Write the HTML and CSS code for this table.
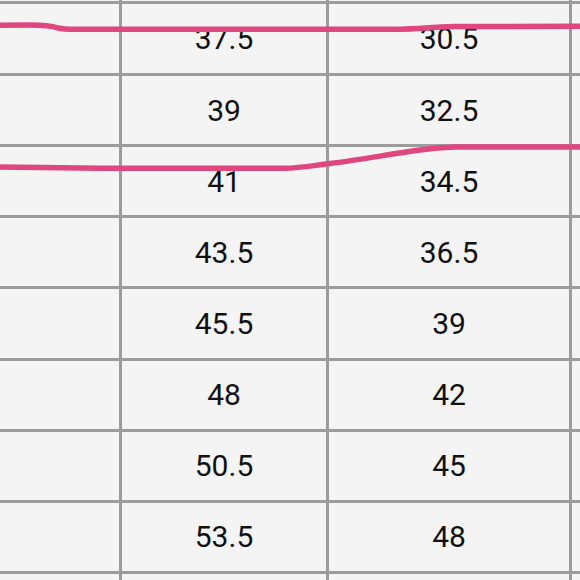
FILE: index.html
```html
<!DOCTYPE html>
<html>
<head>
<meta charset="utf-8">
<link rel="stylesheet" href="styles.css">
</head>
<body>
<div class="sheet">
  <div class="grid">
    <div class="cell"></div><div class="cell"></div><div class="cell"></div><div class="cell"></div>
    <div class="cell"></div><div class="cell">37.5</div><div class="cell">30.5</div><div class="cell"></div>
    <div class="cell"></div><div class="cell">39</div><div class="cell">32.5</div><div class="cell"></div>
    <div class="cell"></div><div class="cell">41</div><div class="cell">34.5</div><div class="cell"></div>
    <div class="cell"></div><div class="cell">43.5</div><div class="cell">36.5</div><div class="cell"></div>
    <div class="cell"></div><div class="cell">45.5</div><div class="cell">39</div><div class="cell"></div>
    <div class="cell"></div><div class="cell">48</div><div class="cell">42</div><div class="cell"></div>
    <div class="cell"></div><div class="cell">50.5</div><div class="cell">45</div><div class="cell"></div>
    <div class="cell"></div><div class="cell">53.5</div><div class="cell">48</div><div class="cell"></div>
    <div class="cell"></div><div class="cell"></div><div class="cell"></div><div class="cell"></div>
  </div>
  <svg class="ink" width="580" height="580" viewBox="0 0 580 580">
    <path d="M0 25.3 L30 25 C45 25 52 26 58 28 C62 29 66 29.3 75 29.3 L400 29.2 C420 29 430 26.8 455 26.5 L580 26.3"/>
    <path d="M0 167 L100 168.3 L285 168.3 C300 168 310 166 330 163.5 C360 160 390 154 420 150 C430 148.5 440 147.3 455 147 L580 147"/>
  </svg>
</div>
</body>
</html>
```
FILE: styles.css
```css
html, body {
  margin: 0;
  padding: 0;
  background: #f4f4f4;
}
.sheet {
  position: relative;
  width: 580px;
  height: 580px;
  overflow: hidden;
}
.grid {
  display: grid;
  grid-template-columns: 119px 204px 240px 1fr;
  grid-template-rows: 1px 69px repeat(7, 68.15px) 1fr;
  gap: 3px;
  height: 580px;
  background: #9c9c9c;
}
.cell {
  background: #f4f4f4;
  display: flex;
  align-items: center;
  justify-content: center;
  font-family: Roboto, "Liberation Sans", sans-serif;
  font-size: 30px;
  color: #111;
  overflow: hidden;
}
.ink {
  position: absolute;
  left: 0;
  top: 0;
}
.ink path {
  fill: none;
  stroke: #e0467f;
  stroke-width: 5.5;
  stroke-linecap: round;
  stroke-linejoin: round;
}
```
